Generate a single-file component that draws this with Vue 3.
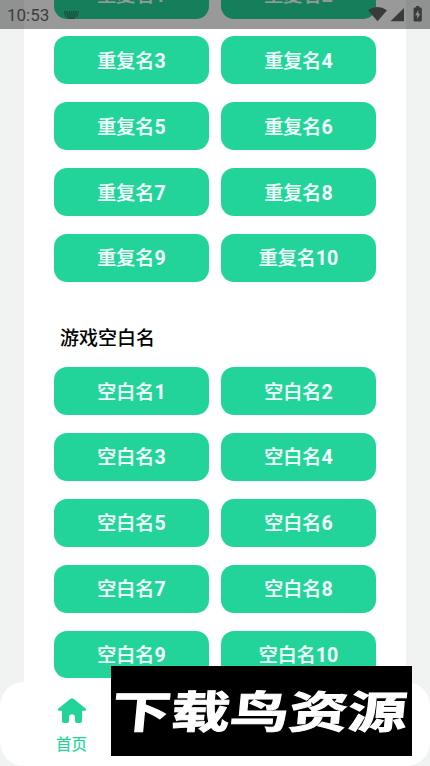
<script setup>
const groups = [
  { label: '重复名', count: 10 },
  { label: '空白名', count: 10, title: '游戏空白名' },
]
</script>

<template>
  <div class="screen">
    <main class="card">
      <section v-for="g in groups" :key="g.label" class="group">
        <h2 v-if="g.title" class="title">{{ g.title }}</h2>
        <div class="grid">
          <button v-for="n in g.count" :key="n" class="btn"><span>{{ g.label }}</span><b>{{ n }}</b></button>
        </div>
      </section>
    </main>

    <header class="status">
      <span class="time">10:53</span>
      <svg class="keyboard" width="15" height="8" viewBox="0 0 15 8">
        <path d="M0 1H15M.5 3H14.5M1 5H14" stroke="#252a28" stroke-width="1.2" stroke-dasharray="1.6 .6" />
        <path d="M3.5 7H11" stroke="#252a28" stroke-width="1" />
      </svg>
      <svg class="signals" width="55" height="17" viewBox="0 0 55 17">
        <path d="M0 4.2Q9.5-2.2 19 4.2L9.5 15.2Z" />
        <path d="M36 2V15.2H22.5Z" />
        <path fill-rule="evenodd" d="M48.2 0h3v1.5h1.4q1.2 0 1.2 1.2v11.5q0 1.2-1.2 1.2h-5.8q-1.2 0-1.2-1.2V2.7q0-1.2 1.2-1.2h1.4ZM50.4 4l-3.2 5.2h2V13l3.1-5.2h-1.9Z" />
      </svg>
    </header>

    <nav class="nav">
      <a class="tab">
        <svg width="30" height="26" viewBox="0 0 30 26">
          <path d="M13.2.9Q15-.5 16.8.9L28.6 10.6Q30 12.5 27.8 12.8H25V23Q25 25 23 25H20Q18 25 18 23V19.3C18 15.2 12 15.2 12 19.3V23Q12 25 10 25H7Q5 25 5 23V12.8H2.2Q0 12.5 1.4 10.6Z" />
        </svg>
        <span>首页</span>
      </a>
    </nav>

    <div class="mark"><span>下载鸟资源</span></div>
  </div>
</template>

<style>
body { margin: 0; }
</style>

<style scoped>
.screen {
  position: relative;
  height: 766px;
  overflow: hidden;
  background: #f1f3f2;
  font-family: Roboto, "Noto Sans CJK SC", sans-serif;
}
.card {
  box-sizing: border-box;
  height: 766px;
  margin: 0 24px;
  padding: 0 30px;
  background: #fff;
  overflow: hidden;
}
.group:first-child { margin-top: -29.4px; }
.grid {
  display: grid;
  grid-template-columns: 1fr 1fr;
  grid-auto-rows: 47.9px;
  gap: 17.95px 12px;
}
.btn {
  display: flex;
  align-items: center;
  justify-content: center;
  padding: 3px 0 0;
  border: 0;
  border-radius: 13px;
  background: #23d49a;
  color: #f4fffb;
  font-family: inherit;
  font-size: 19px;
  font-weight: 500;
  line-height: 28px;
}
.btn span { -webkit-text-stroke: .2px currentColor; }
.btn b {
  font-size: 19.6px;
  font-weight: 700;
}
.title {
  margin: 0;
  padding: 43px 6px 14.4px;
  font-size: 19px;
  font-weight: 500;
  line-height: 28px;
  color: #000;
}
.status {
  position: absolute;
  inset: 0 0 auto;
  height: 29px;
  box-sizing: border-box;
  padding: 0 7px 0 7px;
  display: flex;
  align-items: center;
  background: rgba(0, 0, 0, .4);
}
.time {
  width: 57px;
  font-size: 17px;
  font-weight: 400;
  line-height: 29px;
  padding-top: 1px;
  box-sizing: border-box;
  height: 29px;
  color: #3d3d3d;
}
.signals { margin-left: auto; fill: #383b3a; }
.nav {
  position: absolute;
  inset: auto 0 0;
  height: 84px;
  border-radius: 24px;
  background: #fff;
  display: flex;
}
.tab {
  display: flex;
  flex-direction: column;
  align-items: center;
  width: 143px;
  padding-top: 16px;
  box-sizing: border-box;
  color: #23d49a;
  font-size: 15.5px;
  font-weight: 400;
  line-height: 22px;
}
.tab span { -webkit-text-stroke: .2px currentColor; }
.tab svg { fill: currentColor; margin-bottom: 10px; }
.mark {
  position: absolute;
  left: 111px;
  top: 666px;
  width: 301px;
  height: 90px;
  background: #000;
  display: flex;
  align-items: center;
  justify-content: center;
}
.mark span {
  color: #fff;
  font-family: "Noto Sans CJK SC", sans-serif;
  font-size: 44px;
  font-weight: 700;
  line-height: 84px;
  margin: 0 3px 5px 0;
  white-space: nowrap;
  -webkit-text-stroke: 1px #fff;
  transform: scaleX(1.34) skewX(-4deg);
}
</style>
